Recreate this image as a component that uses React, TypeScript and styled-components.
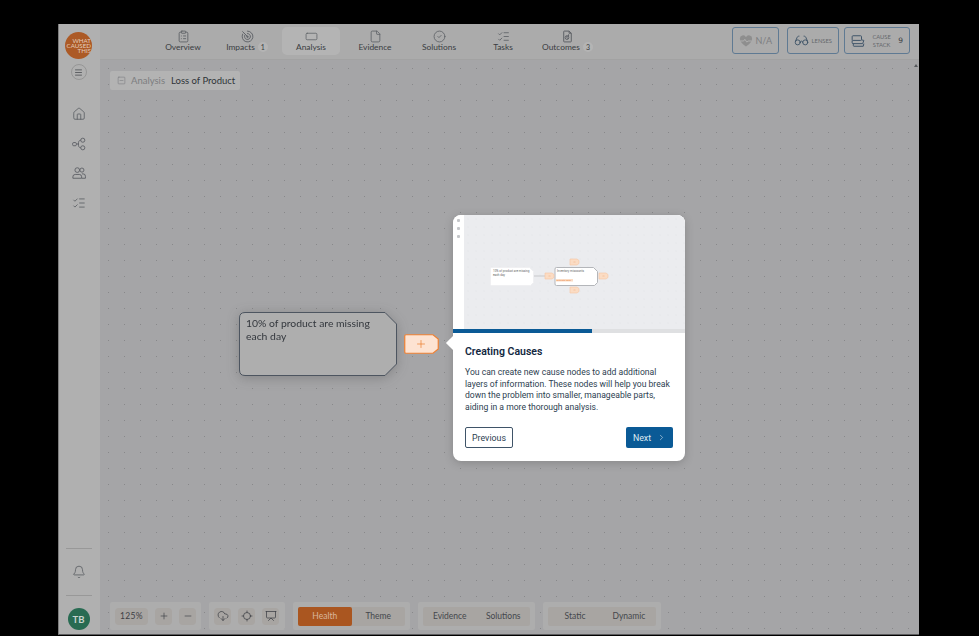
import React from "react";
import styled, { createGlobalStyle } from "styled-components";
import {
  Bell, CircleCheck, ClipboardList, CloudDownload, ChevronRight, File, Glasses, Home,
  ListChecks, Locate, Menu, Minus, Plus, Presentation, RectangleHorizontal, SquareMinus,
} from "lucide-react";

const Global = createGlobalStyle`
  html, body { margin: 0; padding: 0; background: #000; height: 100%; overflow: hidden; }
  body { font-family: "Lato", "Liberation Sans", sans-serif; color: #33373d; }
  * { box-sizing: border-box; }
`;

const Page = styled.div`
  width: 979px;
  height: 636px;
  padding: 24px 60px 1px 58px;
  background: #000;
`;
const Frame = styled.div`
  position: relative;
  height: 611px;
  display: flex;
  background: #a5a5a7;
  border-bottom: 1px solid #5c5c5e;
  border-left: 1px solid #7d7d7d;
`;
const Sidebar = styled.aside`
  width: 41px;
  flex: none;
  background: #b0b0b0;
  display: flex;
  flex-direction: column;
  align-items: center;
  padding: 8px 2px 4px 0;
  color: #5a5d62;
`;
const Logo = styled.div`
  width: 27px;
  height: 27px;
  border-radius: 50%;
  background: #ac5a26;
  color: #e4cdbd;
  font-size: 6.2px;
  line-height: 5.2px;
  text-align: right;
  padding: 5.5px 1px 0 0;
  overflow: hidden;
  white-space: nowrap;
  flex: none;
`;
const RoundBtn = styled.div`
  width: 16px;
  height: 16px;
  margin-top: 5px;
  border-radius: 50%;
  border: 1px solid #969696;
  display: flex;
  align-items: center;
  justify-content: center;
  color: #44474c;
`;
const SideNav = styled.nav`
  margin-top: 19px;
  display: flex;
  flex-direction: column;
`;
const SideItem = styled.div`
  height: 29.7px;
  display: flex;
  align-items: center;
  justify-content: center;
`;
const Grow = styled.div`flex: 1;`;
const Divider = styled.div`
  width: 26px;
  height: 1px;
  background: #989898;
`;
const BellWrap = styled.div`
  height: 46px;
  display: flex;
  align-items: center;
  justify-content: center;
`;
const Avatar = styled.div`
  margin-top: 12px;
  width: 22px;
  height: 22px;
  border-radius: 50%;
  background: #286b52;
  color: #c9d4cf;
  font-size: 9.5px;
  font-weight: 700;
  display: flex;
  align-items: center;
  justify-content: center;
  flex: none;
`;
const Main = styled.div`
  flex: 1;
  min-width: 0;
  display: flex;
  flex-direction: column;
`;
const Header = styled.header`
  height: 36px;
  flex: none;
  display: flex;
  align-items: center;
  padding: 0 9px 2px 54px;
  background: #ababab;
  border-bottom: 1px solid #a2a2a2;
`;
const Tabs = styled.div`
  display: flex;
  gap: 6px;
`;
const Tab = styled.div<{ $active?: boolean }>`
  min-width: 58px;
  height: 28px;
  padding: 3px 4px 0;
  border-radius: 5px;
  display: flex;
  flex-direction: column;
  align-items: center;
  justify-content: flex-start;
  background: ${(p) => (p.$active ? "#b4b4b4" : "transparent")};
  color: #5d6065;
`;
const TabLabel = styled.div`
  display: flex;
  align-items: center;
  gap: 3px;
  height: 10px;
  margin-top: -1px;
  font-size: 8.4px;
  color: #3a3d42;
  white-space: nowrap;
`;
const Badge = styled.span`
  width: 10px;
  height: 10px;
  border-radius: 50%;
  background: #b4b4b4;
  font-size: 7px;
  display: flex;
  align-items: center;
  justify-content: center;
`;
const HeaderRight = styled.div`
  margin-left: auto;
  display: flex;
  align-items: center;
`;
const OutlineBtn = styled.div<{ $w: number; $gap?: number }>`
  width: ${(p) => p.$w}px;
  height: 27px;
  margin-left: ${(p) => p.$gap ?? 0}px;
  border: 1px solid #5f7a93;
  border-radius: 3px;
  display: flex;
  align-items: center;
  justify-content: space-between;
  padding: 0 6px;
  color: #585c61;
`;
const NaText = styled.span`
  font-size: 9px;
  color: #7b7d80;
`;
const TinyText = styled.span`
  font-size: 5.8px;
  line-height: 7.5px;
  color: #65686c;
  text-align: center;
`;
const CountText = styled.span`
  font-size: 7.5px;
  font-family: "DejaVu Sans", sans-serif;
  color: #3a3d42;
`;
const Canvas = styled.main`
  position: relative;
  flex: 1;
  overflow: hidden;
  background-color: #a5a5a7;
  background-image: radial-gradient(circle at 8.5px 8.5px, #88888a 0.55px, transparent 0.7px);
  background-size: 16px 16px;
`;
const Crumb = styled.div`
  position: absolute;
  left: 10px;
  top: 11px;
  width: 130px;
  height: 19px;
  padding-left: 7px;
  border-radius: 2px;
  background: #b3b3b3;
  display: flex;
  align-items: center;
  font-size: 9.5px;
  white-space: nowrap;
  color: #75777a;
`;
const CrumbMuted = styled.span`
  margin-left: 5px;
  color: #7c7d80;
`;
const CrumbStrong = styled.span`
  margin-left: 6px;
  color: #2f3338;
`;
const Node = styled.div`
  position: absolute;
  left: 139px;
  top: 252px;
  width: 158px;
  height: 64px;
  padding: 5px 7px;
  font-size: 10.4px;
  line-height: 12.5px;
  color: #33373d;
  filter: drop-shadow(0 2px 6px rgba(60, 60, 60, 0.3));
`;
const ShapeSvg = styled.svg`
  position: absolute;
  inset: 0;
  z-index: 0;
`;
const NodeText = styled.div`
  position: relative;
  width: 135px;
`;
const AddBtn = styled.div`
  position: absolute;
  left: 304px;
  top: 274px;
  width: 35px;
  height: 20px;
  padding-right: 2px;
  display: flex;
  align-items: center;
  justify-content: center;
  color: #ea7b2c;
`;
const AddIcon = styled(Plus)`
  position: relative;
`;
const Tour = styled.section`
  position: absolute;
  left: 353px;
  top: 155px;
  width: 232px;
  height: 246px;
  background: #fff;
  border-radius: 8px;
  box-shadow: 0 2px 8px rgba(50, 50, 50, 0.25);
  font-family: "Roboto", "Liberation Sans", sans-serif;
`;
const Arrow = styled.div`
  position: absolute;
  left: -5px;
  top: 123px;
  width: 10px;
  height: 10px;
  background: #fff;
  transform: rotate(45deg);
`;
const Preview = styled.div`
  position: relative;
  height: 114px;
  display: flex;
  border-radius: 8px 8px 0 0;
  overflow: hidden;
  background: #fff;
`;
const PreviewRail = styled.div`
  width: 11px;
  flex: none;
  display: flex;
  flex-direction: column;
  align-items: center;
  gap: 5px;
  padding-top: 4px;
`;
const RailDot = styled.span`
  width: 3px;
  height: 3px;
  border-radius: 1px;
  background: #c4c6c9;
`;
const PreviewCanvas = styled.div`
  flex: 1;
  background-color: #ebecef;
  background-image: radial-gradient(circle at 4px 4px, #e4e5e8 0.5px, transparent 0.8px);
  background-size: 8px 8px;
`;
const Track = styled.div`
  height: 4px;
  background: #dfe0e2;
`;
const TrackFill = styled.div`
  height: 100%;
  background: #0a5a96;
`;
const TourBody = styled.div`
  padding: 12px 12px 0;
`;
const TourTitle = styled.h3`
  margin: 0;
  font-size: 10.5px;
  line-height: 13px;
  font-weight: 600;
  color: #12283f;
`;
const TourText = styled.p`
  margin: 9px 0 0;
  font-size: 8.6px;
  line-height: 11.6px;
  color: #2c3e50;
`;
const TourActions = styled.div`
  margin-top: 14px;
  display: flex;
  justify-content: space-between;
`;
const SecondaryBtn = styled.div`
  width: 48px;
  height: 21px;
  border: 1px solid #3f5468;
  border-radius: 2px;
  font-size: 8.8px;
  color: #2c3e50;
  display: flex;
  align-items: center;
  justify-content: center;
`;
const PrimaryBtn = styled.div`
  width: 47px;
  height: 21px;
  border-radius: 2px;
  background: #0a5a96;
  color: #dfe9f1;
  font-size: 8.8px;
  display: flex;
  align-items: center;
  justify-content: center;
  gap: 6px;
`;
const BottomBar = styled.div`
  position: absolute;
  left: 10px;
  bottom: 4px;
  display: flex;
  gap: 8px;
  align-items: flex-end;
`;
const Group = styled.div<{ $w: number }>`
  width: ${(p) => p.$w}px;
  height: 28px;
  padding: 0 5px;
  border-radius: 2px;
  background: #adadad;
  display: flex;
  align-items: center;
  gap: 7px;
`;
const Pill = styled.div<{ $w: number }>`
  width: ${(p) => p.$w}px;
  height: 17px;
  border-radius: 4px;
  background: #a8a5a2;
  font-size: 8.5px;
  letter-spacing: 0.3px;
  color: #3d4045;
  display: flex;
  align-items: center;
  justify-content: center;
`;
const Segments = styled.div`
  flex: 1;
  height: 19px;
  border-radius: 2px;
  background: #a8a5a2;
  display: flex;
`;
const Segment = styled.div<{ $on?: boolean }>`
  flex: 1;
  height: 100%;
  border-radius: 2px;
  font-size: 8.5px;
  display: flex;
  align-items: center;
  justify-content: center;
  background: ${(p) => (p.$on ? "#aa5620" : "transparent")};
  color: ${(p) => (p.$on ? "#d9b79c" : "#44474c")};
`;
const ScrollArrow = styled.div`
  position: absolute;
  right: 1px;
  top: 4px;
  width: 0;
  height: 0;
  border-left: 2px solid transparent;
  border-right: 2px solid transparent;
  border-bottom: 3px solid #55585c;
`;

const ImpactIcon = () => (
  <svg width="13" height="13" viewBox="0 0 24 24" fill="none" stroke="currentColor" strokeWidth="1.7" strokeLinecap="round">
    <path d="M12 2a10 10 0 1 1-9 5.6" />
    <path d="M12 6.5a5.5 5.5 0 1 1-5 3" />
    <path d="M12 11a1.5 1.5 0 1 1-1.4 1" />
    <path d="M3 3l9 9" />
  </svg>
);
const OutcomeIcon = () => (
  <svg width="13" height="13" viewBox="0 0 24 24" fill="none" stroke="currentColor" strokeWidth="1.8" strokeLinejoin="round">
    <path d="M6 2h9l4 4v15a1 1 0 0 1-1 1H6a1 1 0 0 1-1-1V3a1 1 0 0 1 1-1z" />
    <path d="M15 2v4h4" />
    <circle cx="11" cy="14" r="3.4" />
    <path d="M11 10.6V14l2.4 2.4M14 8v4" />
  </svg>
);
const NetworkIcon = () => (
  <svg width="14" height="14" viewBox="0 0 24 24" fill="none" stroke="currentColor" strokeWidth="1.5">
    <rect x="1" y="9.5" width="6.5" height="5.5" rx="2" />
    <circle cx="18.5" cy="5.5" r="3.5" />
    <circle cx="18.5" cy="18.5" r="3.5" />
    <path d="M7.5 12H11M11 12c0-4 1-6.5 4-6.5M11 12c0 4 1 6.5 4 6.5" />
  </svg>
);
const PeopleIcon = () => (
  <svg width="14" height="14" viewBox="0 0 24 24" fill="none" stroke="currentColor" strokeWidth="1.5">
    <circle cx="9" cy="7" r="4" />
    <circle cx="17" cy="7" r="3.5" />
    <path d="M1.5 21v-2.5a4 4 0 0 1 4-4h7a4 4 0 0 1 4 4V21z" />
    <path d="M17 13.5h2a4 4 0 0 1 4 4V21h-6" />
  </svg>
);
const StackIcon = () => (
  <svg width="14" height="14" viewBox="0 0 24 24" fill="none" stroke="#3f5468" strokeWidth="1.7" strokeLinejoin="round">
    <rect x="2" y="3" width="16" height="8" rx="1.5" />
    <path d="M2 11v4a1.5 1.5 0 0 0 1.5 1.5H20l2-5.5-4-1" />
    <path d="M4 16.5V20a1 1 0 0 0 1 1h16l1-4.5" />
  </svg>
);
const HealthIcon = () => (
  <svg width="14" height="14" viewBox="0 0 24 24" fill="none">
    <path d="M12 21.5C5 16 1.5 12.5 1.5 8A5.5 5.5 0 0 1 12 5.5 5.5 5.5 0 0 1 22.5 8c0 4.5-3.5 8-10.5 13.5z" fill="#8e8e8e" />
    <path d="M2 12h6l2-3 3.5 5 2-2h6.5" stroke="#b0b0b0" strokeWidth="1.6" />
  </svg>
);

const MiniAdd = ({ x, y }: { x: number; y: number }) => (
  <g>
    <path d={`M${x} ${y}h7l2 1.5v3l-2 1.5h-7z`} fill="#fbdcc4" stroke="#f6c6a2" strokeWidth="0.6" />
    <path d={`M${x + 3.5} ${y + 3}h2`} stroke="#eda878" strokeWidth="0.5" />
  </g>
);

const PreviewArt = () => (
  <svg width="221" height="114" viewBox="0 0 221 114" fill="none">
    <path d="M27.5 52.5h38l4 4v11l-3 3h-39a1 1 0 0 1-1-1v-16a1 1 0 0 1 1-1z" fill="#fff" stroke="#f0f0f2" />
    <text x="29" y="56.5" fontSize="3" fill="#666">10% of product are missing</text>
    <text x="29" y="60.5" fontSize="3" fill="#666">each day</text>
    <path d="M70 61h11" stroke="#cdced1" strokeWidth="1.2" />
    <path d="M92.5 52.5h37l4 4v11l-3 3h-38a1.5 1.5 0 0 1-1.5-1.5v-15a1.5 1.5 0 0 1 1.5-1.5z" fill="#fff" stroke="#b4b6ba" />
    <text x="93" y="56.5" fontSize="3" fill="#666">Inventory miscounts</text>
    <rect x="92" y="64" width="17" height="2.5" fill="#fbdcc4" />
    <text x="92.5" y="66" fontSize="2.5" fill="#ea8a4a">activate data</text>
    <MiniAdd x={81} y={58} />
    <MiniAdd x={106} y={44} />
    <MiniAdd x={106} y={72} />
    <MiniAdd x={135} y={58} />
  </svg>
);

export default function App() {
  return (
    <Page>
      <Global />
      <Frame>
        <Sidebar>
          <Logo>WHAT<br />CAUSED<br />THIS</Logo>
          <RoundBtn><Menu size={9} strokeWidth={2} /></RoundBtn>
          <SideNav>
            <SideItem><Home size={14} strokeWidth={1.4} /></SideItem>
            <SideItem><NetworkIcon /></SideItem>
            <SideItem><PeopleIcon /></SideItem>
            <SideItem><ListChecks size={14} strokeWidth={1.4} /></SideItem>
          </SideNav>
          <Grow />
          <Divider />
          <BellWrap><Bell size={14} strokeWidth={1.4} /></BellWrap>
          <Divider />
          <Avatar>TB</Avatar>
        </Sidebar>
        <Main>
          <Header>
            <Tabs>
              <Tab><ClipboardList size={13} strokeWidth={1.6} /><TabLabel>Overview</TabLabel></Tab>
              <Tab><ImpactIcon /><TabLabel>Impacts<Badge>1</Badge></TabLabel></Tab>
              <Tab $active><RectangleHorizontal size={13} strokeWidth={1.4} /><TabLabel>Analysis</TabLabel></Tab>
              <Tab><File size={13} strokeWidth={1.5} /><TabLabel>Evidence</TabLabel></Tab>
              <Tab><CircleCheck size={13} strokeWidth={1.5} /><TabLabel>Solutions</TabLabel></Tab>
              <Tab><ListChecks size={13} strokeWidth={1.5} /><TabLabel>Tasks</TabLabel></Tab>
              <Tab><OutcomeIcon /><TabLabel>Outcomes<Badge>3</Badge></TabLabel></Tab>
            </Tabs>
            <HeaderRight>
              <OutlineBtn $w={47}><HealthIcon /><NaText>N/A</NaText></OutlineBtn>
              <OutlineBtn $w={52} $gap={8}><Glasses size={15} strokeWidth={1.5} color="#3f5468" /><TinyText>LENSES</TinyText></OutlineBtn>
              <OutlineBtn $w={66} $gap={5}><StackIcon /><TinyText>CAUSE<br />STACK</TinyText><CountText>9</CountText></OutlineBtn>
            </HeaderRight>
          </Header>
          <Canvas>
            <ScrollArrow />
            <Crumb>
              <SquareMinus size={9} strokeWidth={1.4} />
              <CrumbMuted>Analysis</CrumbMuted>
              <CrumbStrong>Loss of Product</CrumbStrong>
            </Crumb>
            <Node>
              <ShapeSvg width="158" height="64" viewBox="0 0 158 64">
                <path d="M6 .5H146L157.5 12V52L146 63.5H6Q.5 63.5 .5 58V6Q.5 .5 6 .5Z" fill="#aeaeae" stroke="#4d5560" />
              </ShapeSvg>
              <NodeText>10% of product are missing each day</NodeText>
            </Node>
            <AddBtn>
              <ShapeSvg width="35" height="20" viewBox="0 0 35 20">
                <path d="M2 .75H29L34.25 5V15L29 19.25H2Q.75 19.25 .75 18V2Q.75 .75 2 .75Z" fill="#fde3d2" stroke="#ee8033" strokeWidth="1.2" />
              </ShapeSvg>
              <AddIcon size={12} strokeWidth={1.4} />
            </AddBtn>
            <Tour>
              <Arrow />
              <Preview>
                <PreviewRail><RailDot /><RailDot /><RailDot /></PreviewRail>
                <PreviewCanvas><PreviewArt /></PreviewCanvas>
              </Preview>
              <Track><TrackFill style={{ width: "60%" }} /></Track>
              <TourBody>
                <TourTitle>Creating Causes</TourTitle>
                <TourText>You can create new cause nodes to add additional layers of information. These nodes will help you break down the problem into smaller, manageable parts, aiding in a more thorough analysis.</TourText>
                <TourActions>
                  <SecondaryBtn>Previous</SecondaryBtn>
                  <PrimaryBtn>Next<ChevronRight size={9} strokeWidth={1.5} /></PrimaryBtn>
                </TourActions>
              </TourBody>
            </Tour>
            <BottomBar>
              <Group $w={91}>
                <Pill $w={33}>125%</Pill>
                <Pill $w={17}><Plus size={10} strokeWidth={1.6} /></Pill>
                <Pill $w={17}><Minus size={10} strokeWidth={1.6} /></Pill>
              </Group>
              <Group $w={76}>
                <Pill $w={17}><CloudDownload size={12} strokeWidth={1.5} /></Pill>
                <Pill $w={17}><Locate size={12} strokeWidth={1.5} /></Pill>
                <Pill $w={17}><Presentation size={12} strokeWidth={1.5} /></Pill>
              </Group>
              <Group $w={117}>
                <Segments><Segment $on>Health</Segment><Segment>Theme</Segment></Segments>
              </Group>
              <Group $w={117}>
                <Segments><Segment>Evidence</Segment><Segment>Solutions</Segment></Segments>
              </Group>
              <Group $w={118}>
                <Segments><Segment>Static</Segment><Segment>Dynamic</Segment></Segments>
              </Group>
            </BottomBar>
          </Canvas>
        </Main>
      </Frame>
    </Page>
  );
}
